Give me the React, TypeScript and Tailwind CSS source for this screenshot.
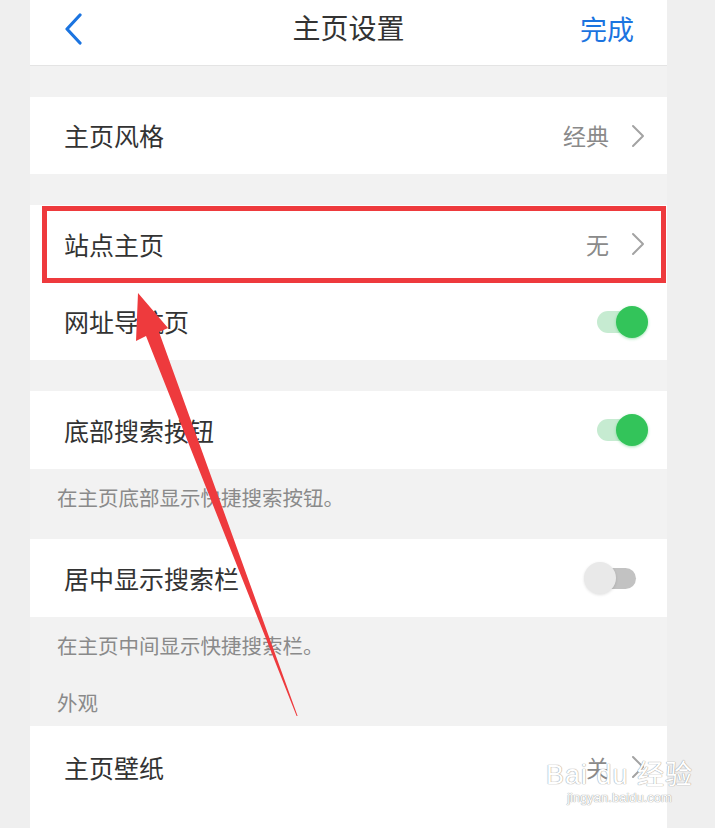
import React from "react";

const font = "font-['Noto_Sans_CJK_SC','Noto_Sans',sans-serif]";

function Chevron() {
  return (
    <svg width="14" height="24" viewBox="0 0 14 24" className="shrink-0">
      <polyline points="2,2 12,12 2,22" fill="none" stroke="#a3a3a3" strokeWidth="2" strokeLinecap="round" strokeLinejoin="round" />
    </svg>
  );
}

function Toggle({ on }: { on: boolean }) {
  if (on) {
    return (
      <div className="relative w-[51px] h-[32px] mr-[19px] flex items-center">
        <div className="w-[44px] h-[22px] rounded-full bg-[#c6ebd1]" />
        <div className="absolute right-0 top-0 w-[32px] h-[32px] rounded-full bg-[#33c45a] shadow-[0_1px_3px_rgba(51,196,90,0.45)]" />
      </div>
    );
  }
  return (
    <div className="relative w-[52px] h-[32px] mr-[31px] flex items-center justify-end">
      <div className="w-[46px] h-[21px] rounded-full bg-[#c2c2c2]" />
      <div className="absolute left-0 top-0 w-[32px] h-[32px] rounded-full bg-[#e9e9e9] shadow-[0_1px_3px_rgba(0,0,0,0.12)]" />
    </div>
  );
}

function Row({ label, value, toggle, h = "h-[78px]" }: { label: string; value?: string; toggle?: boolean; h?: string }) {
  return (
    <div className={`${h} bg-white flex items-center pl-[34px]`}>
      <span className="flex-1 text-[25px] text-[#333] leading-none">{label}</span>
      {value !== undefined && (
        <div className="flex items-center gap-[22px] pr-[22px]">
          <span className="text-[23px] text-[#8a8a8a] leading-none">{value}</span>
          <Chevron />
        </div>
      )}
      {toggle !== undefined && <Toggle on={toggle} />}
    </div>
  );
}

export default function App() {
  return (
    <div className={`relative w-[715px] h-[828px] overflow-hidden bg-[#efefef] ${font}`}>
      <div className="ml-[30px] w-[637px] h-full bg-[#f2f2f2] flex flex-col">
        {/* header */}
        <div className="h-[66px] shrink-0 bg-white border-b border-[#e4e4e4] flex items-center pb-[8px] px-[33px] relative">
          <svg width="20" height="32" viewBox="0 0 20 32" className="ml-[1px]">
            <polyline points="16,2 3,16 16,30" fill="none" stroke="#1b74e0" strokeWidth="3.2" strokeLinecap="round" strokeLinejoin="round" />
          </svg>
          <span className="absolute left-0 right-0 top-[13px] text-center text-[28px] text-[#333] leading-none">主页设置</span>
          <span className="ml-auto text-[27px] text-[#1b74e0] leading-none">完成</span>
        </div>

        <div className="h-[31px] shrink-0" />
        <Row label="主页风格" value="经典" h="h-[77px]" />
        <div className="h-[31px] shrink-0" />
        <Row label="站点主页" value="无" />
        <Row label="网址导航页" toggle={true} h="h-[77px]" />
        <div className="h-[31px] shrink-0" />
        <Row label="底部搜索按钮" toggle={true} />
        <div className="h-[70px] shrink-0 pt-[14px] pl-[27px] text-[20.5px] leading-[28px] text-[#8a8a8a]">
          在主页底部显示快捷搜索按钮。
        </div>
        <Row label="居中显示搜索栏" toggle={false} />
        <div className="h-[109px] shrink-0 pt-[14px] pl-[27px] text-[20.5px] leading-[28px] text-[#8a8a8a] flex flex-col gap-[29px]">
          <span>在主页中间显示快捷搜索栏。</span>
          <span>外观</span>
        </div>
        <Row label="主页壁纸" value="关" h="h-[82px]" />
        <div className="flex-1 bg-white" />
      </div>

      {/* annotation: red highlight box */}
      <div className="absolute left-[42px] top-[206px] w-[624px] h-[77px] border-[5px] border-[#ee3a3d]" />

      {/* annotation: arrow */}
      <svg className="absolute left-0 top-0" width="715" height="828" viewBox="0 0 715 828">
        <polygon
          points="138,293 168,328 159,332 297.6,716 296.6,716 146,336 136,341"
          fill="#ee3a3d"
        />
      </svg>

      {/* watermark */}
      <div className="absolute left-[546px] top-[760px] flex flex-col items-center text-white [text-shadow:0_0_1px_#9a9a9a,0_0_1px_#9a9a9a] font-['Liberation_Sans','Noto_Sans_CJK_SC',sans-serif]">
        <span className="text-[27px] leading-[30px] tracking-[1px]">Bai du 经验</span>
        <span className="text-[13px] leading-[16px]">jingyan.baidu.com</span>
      </div>
    </div>
  );
}
